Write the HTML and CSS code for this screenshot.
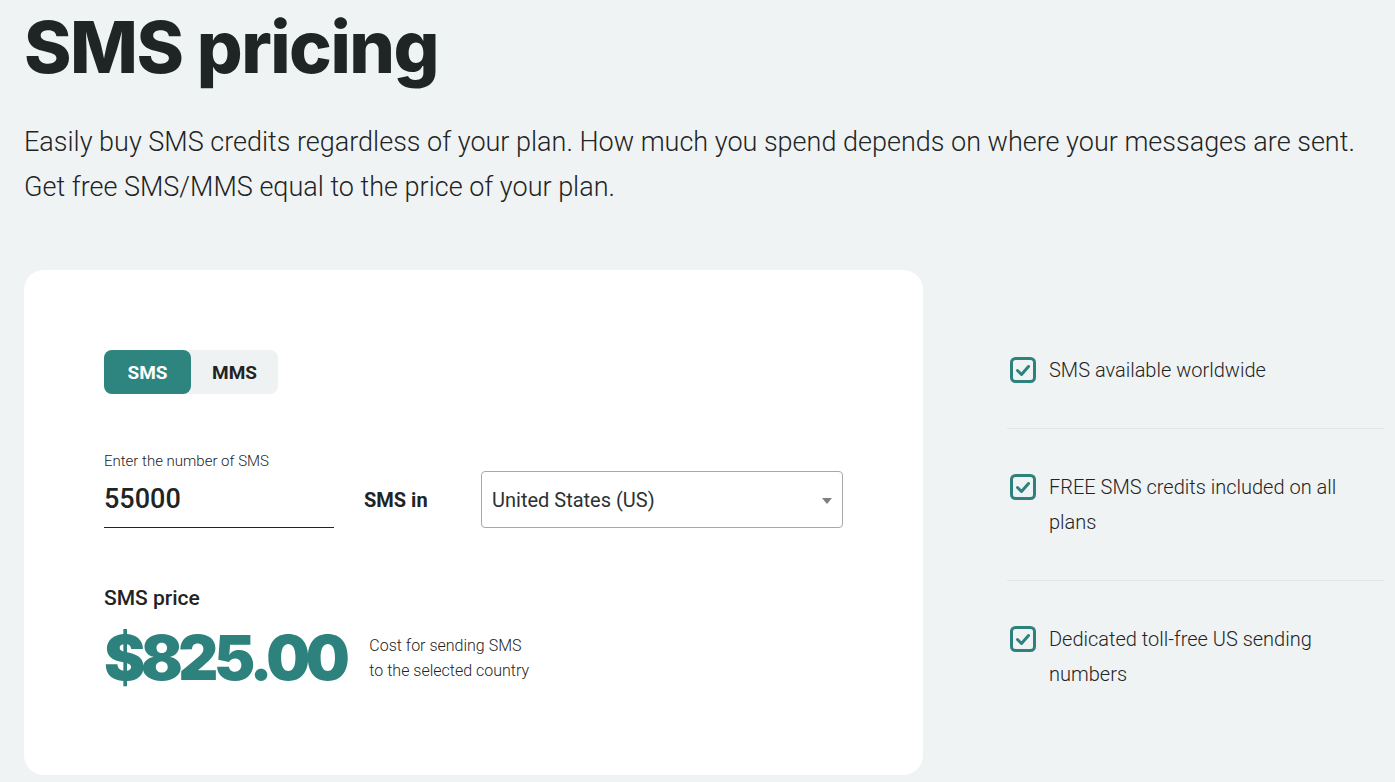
FILE: index.html
```html
<!DOCTYPE html>
<html lang="en">
<head>
    <meta charset="UTF-8">
    <title>SMS pricing</title>
    <link rel="stylesheet" href="styles.css">
</head>
<body>
    <div class="page">
        <h1 class="title">SMS pricing</h1>
        <p class="intro">Easily buy SMS credits regardless of your plan. How much you spend depends on where your messages are sent.<br>Get free SMS/MMS equal to the price of your plan.</p>

        <div class="pricing">
            <div class="calc-card">
                <div class="toggle">
                    <button class="toggle-btn active">SMS</button>
                    <button class="toggle-btn">MMS</button>
                </div>

                <div class="calc-row">
                    <div class="amount">
                        <label for="amount">Enter the number of SMS</label>
                        <input type="text" id="amount" value="55000">
                    </div>
                    <span class="calc-in">SMS in</span>
                    <div class="country">
                        <span>United States (US)</span>
                        <span class="caret"></span>
                    </div>
                </div>

                <div class="price-label">SMS price</div>
                <div class="price-row">
                    <span class="price">$825.00</span>
                    <span class="price-note">Cost for sending SMS<br>to the selected country</span>
                </div>
            </div>

            <ul class="features">
                <li>
                    <svg class="check" viewBox="0 0 26 26" width="26" height="26"><rect x="1.5" y="1.5" width="23" height="23" rx="4" fill="none" stroke="#2e827d" stroke-width="3"/><path d="M7.5 13.5l4 4 7-8" fill="none" stroke="#2e827d" stroke-width="3" stroke-linecap="round" stroke-linejoin="round"/></svg>
                    <span>SMS available worldwide</span>
                </li>
                <li>
                    <svg class="check" viewBox="0 0 26 26" width="26" height="26"><rect x="1.5" y="1.5" width="23" height="23" rx="4" fill="none" stroke="#2e827d" stroke-width="3"/><path d="M7.5 13.5l4 4 7-8" fill="none" stroke="#2e827d" stroke-width="3" stroke-linecap="round" stroke-linejoin="round"/></svg>
                    <span>FREE SMS credits included on all plans</span>
                </li>
                <li>
                    <svg class="check" viewBox="0 0 26 26" width="26" height="26"><rect x="1.5" y="1.5" width="23" height="23" rx="4" fill="none" stroke="#2e827d" stroke-width="3"/><path d="M7.5 13.5l4 4 7-8" fill="none" stroke="#2e827d" stroke-width="3" stroke-linecap="round" stroke-linejoin="round"/></svg>
                    <span>Dedicated toll-free US sending numbers</span>
                </li>
            </ul>
        </div>
    </div>
</body>
</html>
```

FILE: styles.css
```css
body {
    margin: 0;
    background: #eff3f4;
    color: #1f2424;
    font-family: Roboto, 'Liberation Sans', sans-serif;
}

.page {
    padding: 0 24px;
}

/* heading */
.title {
    margin: 0;
    padding-top: 6px;
    font-family: Inter, Roboto, sans-serif;
    font-weight: 800;
    font-size: 72px;
    line-height: 82px;
    letter-spacing: -1.5px;
}

.intro {
    margin: 32px 0 0;
    font-weight: 300;
    font-size: 27px;
    line-height: 45px;
}

.pricing {
    display: flex;
    align-items: flex-start;
    margin-top: 60px;
}

/* calculator card */
.calc-card {
    flex: none;
    width: 899px;
    box-sizing: border-box;
    padding: 80px 80px 81px;
    background: #fff;
    border-radius: 20px;
}

.toggle {
    display: inline-flex;
    background: #eff2f3;
    border-radius: 8px;
}

    .toggle-btn {
        width: 87px;
        height: 44px;
        border: none;
        border-radius: 8px;
        background: transparent;
        color: #1f2424;
        font-family: Roboto, sans-serif;
        font-weight: 700;
        font-size: 19px;
    }

    .toggle-btn.active {
        background: #2e847f;
        color: #fff;
    }

.calc-row {
    display: flex;
    align-items: flex-end;
    margin-top: 58px;
}

.amount {
    width: 230px;
    display: flex;
    flex-direction: column;
}

    .amount label {
        font-weight: 300;
        font-size: 15px;
        line-height: 18px;
    }

    .amount input {
        border: none;
        border-bottom: 1.5px solid #1f2424;
        padding: 13px 0 12px;
        font-family: Roboto, sans-serif;
        font-weight: 500;
        font-size: 27px;
        color: #1f2424;
        outline: none;
        width: 100%;
    }

.calc-in {
    margin-left: 30px;
    width: 117px;
    font-weight: 700;
    font-size: 20px;
    line-height: 56px;
}

.country {
    width: 362px;
    height: 57px;
    box-sizing: border-box;
    border: 1px solid #a6a9aa;
    border-radius: 4px;
    display: flex;
    align-items: center;
    justify-content: space-between;
    padding: 0 10px;
    font-size: 20px;
    color: #2c3131;
}

.caret {
    width: 0;
    height: 0;
    border-left: 5px solid transparent;
    border-right: 5px solid transparent;
    border-top: 6px solid #7d8080;
    margin-top: 3px;
}

.price-label {
    margin-top: 58px;
    font-weight: 500;
    font-size: 21px;
}

.price-row {
    display: flex;
    align-items: center;
    margin-top: 12px;
}

.price {
    font-family: Inter, Roboto, sans-serif;
    font-weight: 900;
    font-size: 62px;
    line-height: 72px;
    color: #2e827d;
    letter-spacing: -4.5px;
}

.price-note {
    margin-left: 24px;
    font-weight: 300;
    font-size: 16px;
    line-height: 25px;
}

/* feature list */
.features {
    flex: none;
    list-style: none;
    margin: 0 0 0 84px;
    padding: 73px 0 0;
    width: 377px;
}

    .features li {
        display: flex;
        align-items: flex-start;
        padding: 10px 0 40px 3px;
        border-bottom: 1px solid #e1e6e7;
        font-weight: 300;
        font-size: 20px;
        line-height: 35px;
    }

    .features li:last-child {
        border-bottom: none;
    }

    .features li + li {
        padding-top: 41px;
    }

.check {
    flex: none;
    margin: 4px 13px 0 0;
}
```
